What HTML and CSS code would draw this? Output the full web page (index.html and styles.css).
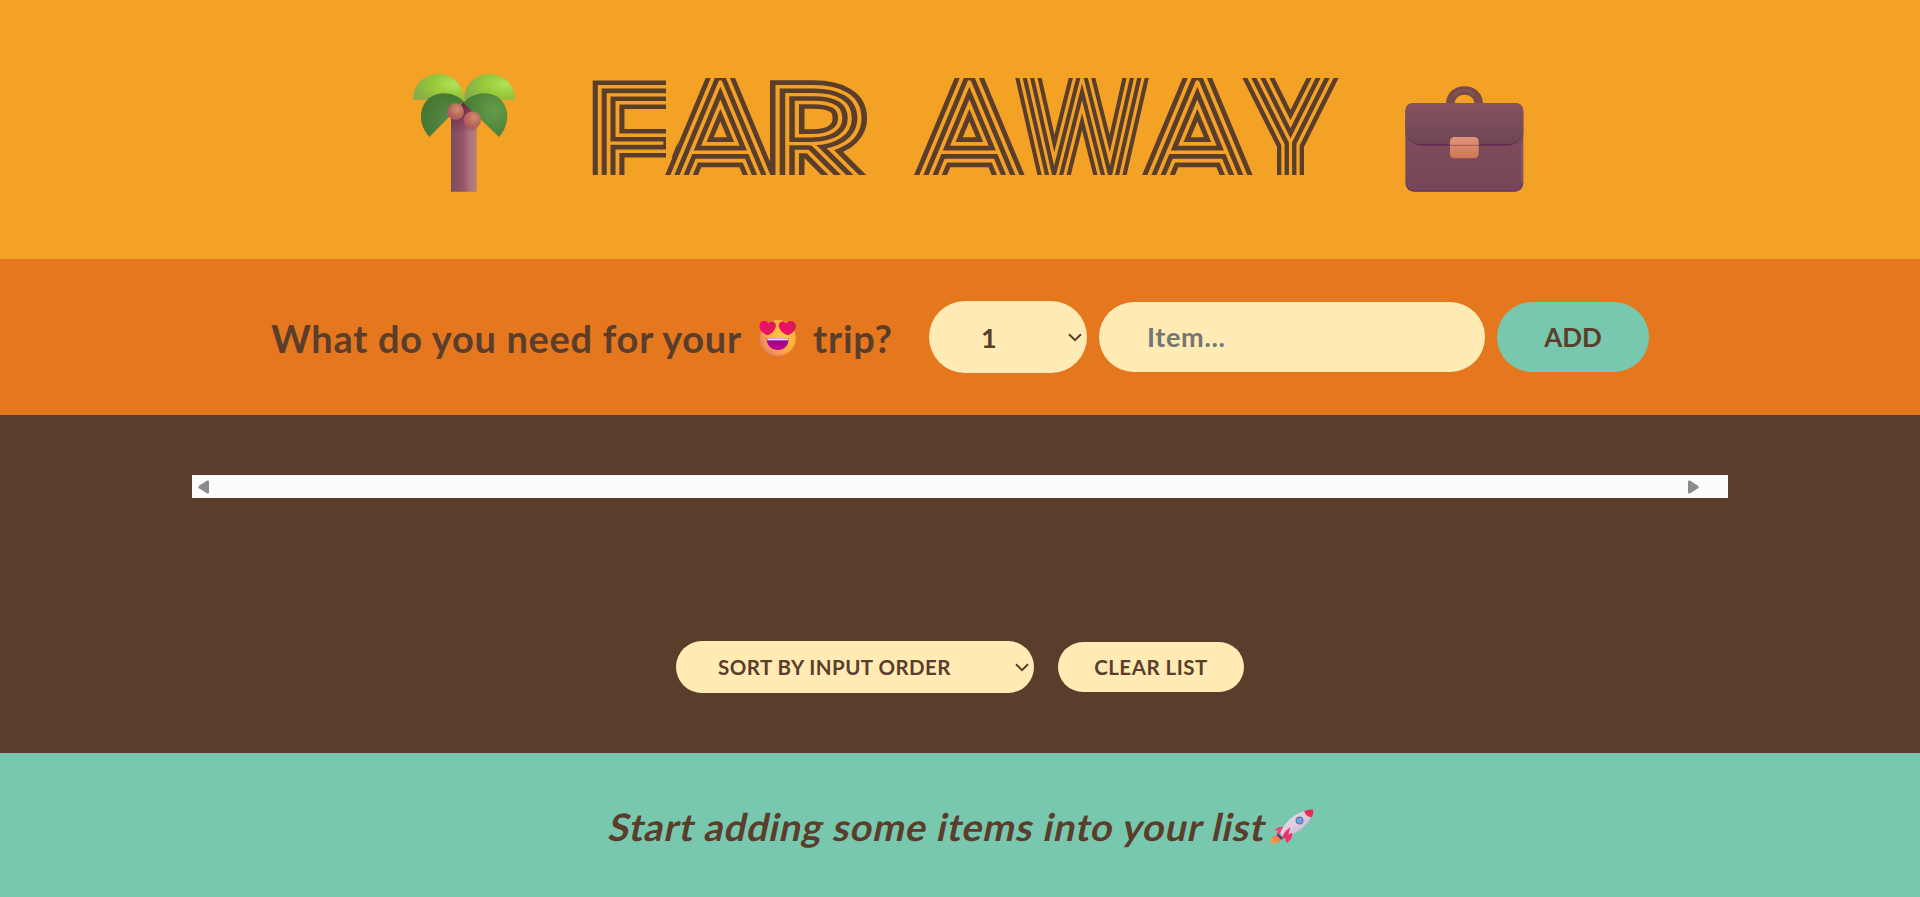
FILE: index.html
```html
<!DOCTYPE html>
<html lang="en">
<head>
<meta charset="utf-8">
<title>Far Away</title>
<link rel="stylesheet" href="styles.css">
</head>
<body>
<div class="app">
  <header class="banner">
    <svg class="palm" viewBox="69 60 306 390" aria-hidden="true">
      <defs>
        <linearGradient id="trunk"><stop offset="0" stop-color="#7c4c5c"/><stop offset=".5" stop-color="#98566a"/><stop offset=".7" stop-color="#ac7178"/><stop offset="1" stop-color="#b57f7d"/></linearGradient>
        <linearGradient id="shade" x2="0" y2="1"><stop offset="0" stop-color="#652643"/><stop offset="1" stop-color="#652643" stop-opacity="0"/></linearGradient>
        <radialGradient id="leaf" cx=".8" cy=".4" r=".8"><stop offset="0" stop-color="#aee35b"/><stop offset=".5" stop-color="#99ca3a"/><stop offset="1" stop-color="#86ae48"/></radialGradient>
        <radialGradient id="dark1" cx=".75" cy=".65" r=".75"><stop offset="0" stop-color="#66895a"/><stop offset=".5" stop-color="#4e813b"/><stop offset="1" stop-color="#467733"/></radialGradient>
        <radialGradient id="dark2" cx=".7" cy=".4" r=".7"><stop offset="0" stop-color="#659c49"/><stop offset=".7" stop-color="#4f853b"/><stop offset="1" stop-color="#467837"/></radialGradient>
        <radialGradient id="nut" cx=".6" cy=".35" r=".65"><stop offset="0" stop-color="#d48d73"/><stop offset=".6" stop-color="#b86d59"/><stop offset="1" stop-color="#b25362"/></radialGradient>
      </defs>
      <path fill="url(#trunk)" d="M183 425V195L222 155L260 195V425Z"/>
      <path fill="url(#shade)" d="M183 250V195L222 155L260 195V250Z"/>
      <path fill="url(#leaf)" d="M69 149C69 104 102 72 145 72C188 72 220 104 222 149Z"/>
      <path fill="url(#leaf)" d="M222 149C222 105 254 72 298 72C341 72 375 104 375 149Z"/>
      <path fill="url(#dark1)" d="M118 261C82 222 87 170 117 145C149 119 198 128 222 155Z"/>
      <path fill="url(#dark2)" d="M327 261C362 222 357 170 328 145C296 119 246 128 220 158Z"/>
      <circle cx="197" cy="185" r="25" fill="url(#nut)"/>
      <circle cx="247" cy="210" r="26" fill="url(#nut)"/>
    </svg>
    <h1 class="title">
      <svg class="title-art" viewBox="590 70 750 130">
        <defs><clipPath id="cap"><path d="M590 78H666V172L703 78H1340V175H590Z"/></clipPath></defs>
        <g clip-path="url(#cap)">
          <g class="line-1"><text id="name"><tspan class="f" x="590" y="191" textLength="86" lengthAdjust="spacingAndGlyphs">F</tspan><tspan class="a" x="671" y="190">A</tspan><tspan class="f" x="767" y="191" textLength="98" lengthAdjust="spacingAndGlyphs">R</tspan> <tspan class="a" x="920" y="190">A</tspan><tspan class="w" x="1024" y="190" textLength="116" lengthAdjust="spacingAndGlyphs">W</tspan><tspan class="a" x="1148" y="190">A</tspan><tspan class="y" x="1255" y="190" textLength="71" lengthAdjust="spacingAndGlyphs">Y</tspan></text></g>
          <use href="#name" class="line-2"/>
          <use href="#name" class="line-3"/>
          <use href="#name" class="line-4"/>
        </g>
      </svg>
    </h1>
    <svg class="case" viewBox="75 0 357 390" aria-hidden="true">
      <defs>
        <linearGradient id="body" x2="0" y2="1"><stop offset="0" stop-color="#84505e"/><stop offset="1" stop-color="#754558"/></linearGradient>
        <linearGradient id="flap" x2="0" y2="1"><stop offset="0" stop-color="#855260"/><stop offset="1" stop-color="#704653"/></linearGradient>
        <linearGradient id="lock" x2="0" y2="1"><stop offset="0" stop-color="#de957a"/><stop offset="1" stop-color="#cf7754"/></linearGradient>
      </defs>
      <path fill="none" stroke="#784b48" stroke-width="26" d="M211 102C211 48 296 48 296 102"/>
      <path fill="none" stroke="#8d6259" stroke-width="6" opacity=".6" d="M222 76C240 56 268 58 284 76"/>
      <rect x="76" y="99" width="354" height="266" rx="25" fill="url(#body)"/>
      <path fill="none" stroke="#6c3560" stroke-width="3" d="M79 340Q82 363 104 363H402Q425 363 428 340"/>
      <path fill="none" stroke="#99616c" stroke-width="3" d="M426 215V338"/>
      <path fill="#642e55" d="M76 190Q90 227 124 227H382Q416 227 430 190Z"/>
      <path fill="url(#flap)" d="M76 192V124Q76 99 101 99H405Q430 99 430 124V192Q412 222 384 222H122Q94 222 76 192Z"/>
      <rect x="210" y="201" width="86" height="64" rx="13" fill="url(#lock)"/>
      <path stroke="#a85251" stroke-width="3" d="M211 226H296"/>
    </svg>
  </header>

  <form class="add-form">
    <h3 class="question"><span class="q1">What do you need for your</span>
      <svg class="face" viewBox="58 60 110 114" aria-hidden="true">
        <defs>
          <radialGradient id="skin" cx=".65" cy=".4" r=".7"><stop offset="0" stop-color="#ffc83d"/><stop offset=".6" stop-color="#fbb03b"/><stop offset="1" stop-color="#e77b73"/></radialGradient>
          <linearGradient id="heart"><stop offset="0" stop-color="#f50b72"/><stop offset="1" stop-color="#d51c51"/></linearGradient>
          <linearGradient id="mouth" x2="0" y2="1"><stop offset="0" stop-color="#8e0785"/><stop offset="1" stop-color="#c80093"/></linearGradient>
        </defs>
        <circle cx="114" cy="117" r="54" fill="url(#skin)"/>
        <path fill="url(#mouth)" d="M80 118H147C146 140 134 153 114 153S81 140 80 118Z"/>
        <path fill="#e6e2f0" d="M82 118H146V124H82Z"/>
        <path fill="url(#heart)" d="M83 109C68 103 57 92 59 78C62 64 78 61 85 73C95 63 109 67 108 81C107 94 94 105 83 109Z"/>
        <path fill="url(#heart)" d="M144 109C132 105 118 94 117 81C116 67 131 63 140 73C148 61 165 65 168 78C170 92 157 104 144 109Z"/>
      </svg>
      <span class="q2">trip?</span></h3>
    <div class="picker qty">
      <select class="control" aria-label="Quantity"><option>1</option><option>2</option><option>3</option></select>
      <svg class="chevron" viewBox="0 0 14 9"><path d="M1 1.2L7 7.2L13 1.2"/></svg>
    </div>
    <input class="control item" type="text" placeholder="Item...">
    <button class="control add" type="button">ADD</button>
  </form>

  <main class="list">
    <div class="scrollbar">
      <svg class="arrow" viewBox="0 0 11 14"><path d="M9.2.6Q11 0 11 1.800V12.200Q11 14 9.200 13.400L1 8.300Q-.5 7 1 5.700Z"/></svg>
      <svg class="arrow" viewBox="0 0 11 14"><path d="M1.800.6Q0 0 0 1.800V12.200Q0 14 1.800 13.400L10 8.300Q11.500 7 10 5.700Z"/></svg>
    </div>
    <div class="actions">
      <div class="picker sort">
        <select class="control" aria-label="Sort"><option>SORT BY INPUT ORDER</option><option>SORT BY DESCRIPTION</option></select>
        <svg class="chevron" viewBox="0 0 14 9"><path d="M1 1.2L7 7.2L13 1.2"/></svg>
      </div>
      <button class="control clear" type="button">CLEAR LIST</button>
    </div>
  </main>

  <footer class="stats">
    <em class="hint">Start adding some items into your list</em>
    <svg class="rocket" viewBox="60 58 132 106" aria-hidden="true">
      <defs>
        <linearGradient id="hull" x1="0" y1="0" x2="1" y2="1"><stop offset="0" stop-color="#e9e4e8"/><stop offset=".5" stop-color="#ddcde0"/><stop offset="1" stop-color="#bda5c5"/></linearGradient>
        <linearGradient id="flame" x1="1" y1="0" x2="0" y2="1"><stop offset="0" stop-color="#e36e4b"/><stop offset="1" stop-color="#ffa044"/></linearGradient>
      </defs>
      <path fill="url(#flame)" d="M82 137C66 138 60 150 61 163C76 163 90 159 96 148Z"/>
      <path fill="#433f70" d="M84 131L99 147L93 151L80 137Z"/>
      <path fill="#f0417d" d="M104 112C88 111 78 115 73 123L85 122L79 134L96 133Z"/>
      <path fill="url(#hull)" d="M190 60C163 62 139 70 119 89C104 104 94 121 90 131L102 143C119 140 145 128 161 112C178 96 188 80 190 60Z"/>
      <path fill="#e72d4d" d="M190 60C181 59 172 61 163 65C166 76 175 83 186 83C190 74 191 66 190 60Z"/>
      <circle cx="149" cy="93" r="12" fill="#757391"/>
      <circle cx="149" cy="93" r="8.500" fill="#59a6f4"/>
      <path fill="#ee326f" d="M121 113C107 122 97 135 96 149L105 146L109 161C122 153 129 143 126 130L115 135Z"/>
    </svg>
  </footer>
</div>
</body>
</html>
```
FILE: styles.css
```css
* { box-sizing: border-box; margin: 0; padding: 0; }

body { font-family: Lato, "Open Sans", sans-serif; color: #5a3e2b; }

.app {
  width: 100%;
  height: 897px;
  display: grid;
  grid-template-rows: 259px 156px 338px 144px;
  overflow: hidden;
}

.banner {
  background: #f4a226;
  display: flex;
  padding: 70px 0 0 413px;
}
.palm { width: 102px; height: 130px; }
.title { width: 750px; height: 130px; margin-left: 75px; }
.title-art { width: 750px; height: 130px; display: block; }
.case { width: 119px; height: 130px; margin-left: 65px; }

/* The striped lettering is a thin face with four nested strokes. */
.title-art text { font-family: Lato, Inter, sans-serif; font-weight: 100; }
.title-art tspan { stroke-width: var(--w); }
.title-art .f { font-size: 138px; stroke-width: calc(var(--w) * .95); }
.title-art .a { font-size: 155px; }
.title-art .w { font-size: 160px; stroke-width: calc(var(--w) * 1.15); }
.title-art .y { font-size: 160px; stroke-width: calc(var(--w) * 1.15); }
.line-1, .line-2, .line-3, .line-4 { stroke-linejoin: miter; stroke-miterlimit: 3; }
.line-1 { stroke: #5a3e2b; fill: #5a3e2b; --w: 28.500px; }
.line-2 { stroke: #f4a226; fill: #f4a226; --w: 18.800px; }
.line-3 { stroke: #5a3e2b; fill: #5a3e2b; --w: 11.500px; }
.line-4 { stroke: #f4a226; fill: #f4a226; --w: 1.800px; }

.add-form {
  background: #e5771f;
  display: flex;
  align-items: center;
  padding-left: 271px;
}
.question {
  width: 658px;
  display: flex;
  align-items: center;
  font-size: 38px;
  font-weight: 700;
  line-height: 46px;
  white-space: nowrap;
  padding-top: 2px;
}
.q1 { width: 488px; letter-spacing: .7px; }
.face { width: 37px; height: 38px; margin-right: 17px; }
.q2 { letter-spacing: .8px; }

.control {
  font-family: inherit;
  font-weight: 700;
  color: #5a3e2b;
  background: #ffebb3;
  border: 0;
  border-radius: 40px;
  appearance: none;
  outline: 0;
}
.picker { position: relative; }
.picker .control { width: 100%; height: 100%; }
.chevron {
  position: absolute;
  right: 5px;
  top: 50%;
  width: 14px;
  height: 9px;
  margin-top: -4px;
  fill: none;
  stroke: #5a3e2b;
  stroke-width: 2px;
}
.qty { width: 158px; height: 72px; margin-right: 12px; }
.qty .control { font-size: 27px; padding-left: 52px; }
.item { width: 386px; height: 70px; margin-right: 12px; padding: 0 48px 2px; font-size: 27px; letter-spacing: .7px; }
.item::placeholder { color: #757575; }
.add { width: 152px; height: 70px; background: #78c8af; font-size: 26px; }

.list {
  background: #5a3d2b;
  padding: 60px 192px 0;
}
.scrollbar {
  height: 23px;
  background: #fcfcfc;
  display: flex;
  justify-content: space-between;
  align-items: center;
  padding: 0 29px 0 6px;
}
.arrow { width: 11px; height: 14px; fill: #8b8b8b; }
.actions {
  display: flex;
  align-items: center;
  justify-content: center;
  gap: 24px;
  margin-top: 143px;
}
.sort { width: 358px; height: 52px; }
.sort .control { font-size: 20.500px; padding-left: 42px; letter-spacing: .45px; }
.clear { width: 186px; height: 50px; font-size: 20.500px; letter-spacing: .5px; }

.stats {
  background: #78c8af;
  display: flex;
  align-items: center;
  padding: 2px 0 0 610px;
}
.hint {
  width: 660px;
  font-size: 38px;
  font-style: normal;
  font-weight: 700;
  line-height: 46px;
  letter-spacing: .82px;
  white-space: nowrap;
  transform: skewX(-12deg);
}
.rocket { width: 44px; height: 35px; }
```
